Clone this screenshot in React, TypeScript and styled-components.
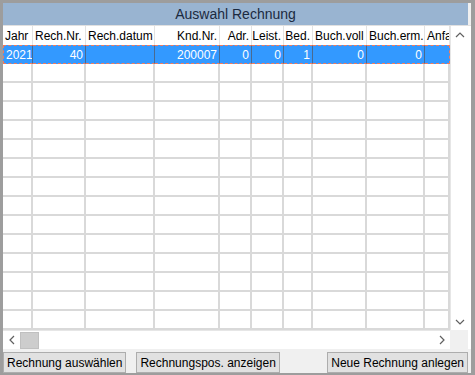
import React from 'react'
import styled, { createGlobalStyle, css } from 'styled-components'

const GlobalStyle = createGlobalStyle`
  html, body {
    margin: 0;
    padding: 0;
    background: #f0f0f0;
  }
  * {
    box-sizing: border-box;
  }
`

const COLS = [30, 53, 69, 65, 32, 32, 29, 54, 58, 25]

const Window = styled.div`
  width: 475px;
  height: 375px;
  display: flex;
  flex-direction: column;
  background: #f0f0f0;
  border-style: solid;
  border-color: #9d9d9d;
  border-width: 3px 4px 2px 3px;
  font-family: 'Liberation Sans', Arial, sans-serif;
  overflow: hidden;
`

const TitleBar = styled.div`
  height: 22px;
  flex: none;
  background: #99b4d1;
  color: #1b2a40;
  font-size: 14px;
  display: flex;
  align-items: center;
  justify-content: center;
  margin-right: 3px;
`

const GridFrame = styled.div`
  display: grid;
  grid-template-columns: 447px 18px;
  grid-template-rows: 304px 19px;
  flex: none;
  background: #fff;
  border-top: 1px solid #e0e0e0;
`

const Table = styled.div`
  display: grid;
  grid-template-columns: ${COLS.map((c) => c + 'px').join(' ')};
  grid-auto-rows: 19px;
  overflow: hidden;
  align-content: start;
  background: #fff;
`

const HeadCell = styled.div<{ $right?: boolean }>`
  font-size: 12px;
  color: #000;
  display: flex;
  align-items: center;
  justify-content: ${({ $right }) => ($right ? 'flex-end' : 'flex-start')};
  padding: 0 2px;
  height: 20px;
  border-right: 1px solid #e3e3e3;
  border-bottom: 1px solid #d4d4d4;
  white-space: nowrap;
  overflow: hidden;
  background: #fff;
`

const Cell = styled.div<{ $right?: boolean; $sel?: boolean; $first?: boolean; $last?: boolean }>`
  font-size: 12px;
  display: flex;
  align-items: center;
  justify-content: ${({ $right }) => ($right ? 'flex-end' : 'flex-start')};
  padding: 0 2px;
  border-right: 2px solid #d9d9d9;
  border-bottom: 2px solid #d9d9d9;
  white-space: nowrap;
  overflow: hidden;
  ${({ $sel, $first, $last }) =>
    $sel &&
    css`
      background: #3399ff;
      color: #fff;
      border-top: 1px dashed #f27a5c;
      border-bottom: 1px dashed #f27a5c;
      border-right: 1px solid #4a6a90;
      ${$first && 'border-left: 1px dashed #f27a5c;'}
      ${$last && 'border-right: 1px dashed #f27a5c;'}
    `}
`

const VScroll = styled.div`
  display: flex;
  flex-direction: column;
  justify-content: space-between;
  align-items: center;
  background: #fff;
  border-left: 1px solid #e6e6e6;
`

const HScroll = styled.div`
  display: flex;
  align-items: center;
  background: #fff;
  border-top: 1px solid #e6e6e6;
`

const Corner = styled.div`
  background: #f0f0f0;
`

const ArrowBox = styled.div`
  width: 17px;
  height: 17px;
  display: flex;
  align-items: center;
  justify-content: center;
  flex: none;
`

const Thumb = styled.div`
  width: 19px;
  height: 17px;
  background: #cdcdcd;
  border: 1px solid #c0c0c0;
  flex: none;
`

const Spacer = styled.div`
  flex: 1;
`

const ButtonBar = styled.div`
  display: flex;
  align-items: center;
  gap: 10px;
  padding: 3px 3px 0 0;
`

const Button = styled.button`
  height: 21px;
  padding: 0 3px;
  font-family: 'Liberation Sans', Arial, sans-serif;
  font-size: 12px;
  color: #000;
  background: #e1e1e1;
  border: 1px solid #adadad;
  white-space: nowrap;
`

const Chevron = ({ dir }: { dir: 'up' | 'down' | 'left' | 'right' }) => {
  const pts = {
    up: '1,6 5,2 9,6',
    down: '1,2 5,6 9,2',
    left: '6,1 2,5 6,9',
    right: '2,1 6,5 2,9',
  }[dir]
  const vertical = dir === 'up' || dir === 'down'
  return (
    <svg width={vertical ? 10 : 8} height={vertical ? 8 : 10} viewBox={vertical ? '0 0 10 8' : '0 0 8 10'}>
      <polyline points={pts} fill="none" stroke="#606060" strokeWidth="1.2" />
    </svg>
  )
}

const headers: [string, boolean][] = [
  ['Jahr', false],
  ['Rech.Nr.', false],
  ['Rech.datum', false],
  ['Knd.Nr.', true],
  ['Adr.', true],
  ['Leist.', true],
  ['Bed.', true],
  ['Buch.voll', false],
  ['Buch.erm.', false],
  ['Anfa', false],
]

const selected: [string, boolean][] = [
  ['2021', false],
  ['40', true],
  ['', false],
  ['200007', true],
  ['0', true],
  ['0', true],
  ['1', true],
  ['0', true],
  ['0', true],
  ['', false],
]

export default function App() {
  const emptyRows = Array.from({ length: 14 })
  return (
    <>
      <GlobalStyle />
      <Window>
        <TitleBar>Auswahl Rechnung</TitleBar>
        <GridFrame>
          <Table>
            {headers.map(([h, r]) => (
              <HeadCell key={h} $right={r}>
                {h}
              </HeadCell>
            ))}
            {selected.map(([v, r], i) => (
              <Cell key={'s' + i} $sel $right={r} $first={i === 0} $last={i === selected.length - 1}>
                {v}
              </Cell>
            ))}
            {emptyRows.map((_, ri) =>
              COLS.map((_, ci) => <Cell key={ri + '-' + ci} />)
            )}
          </Table>
          <VScroll>
            <ArrowBox>
              <Chevron dir="up" />
            </ArrowBox>
            <ArrowBox>
              <Chevron dir="down" />
            </ArrowBox>
          </VScroll>
          <HScroll>
            <ArrowBox>
              <Chevron dir="left" />
            </ArrowBox>
            <Thumb />
            <Spacer />
            <ArrowBox>
              <Chevron dir="right" />
            </ArrowBox>
          </HScroll>
          <Corner />
        </GridFrame>
        <ButtonBar>
          <Button>Rechnung auswählen</Button>
          <Button>Rechnungspos. anzeigen</Button>
          <Spacer />
          <Button>Neue Rechnung anlegen</Button>
        </ButtonBar>
      </Window>
    </>
  )
}
